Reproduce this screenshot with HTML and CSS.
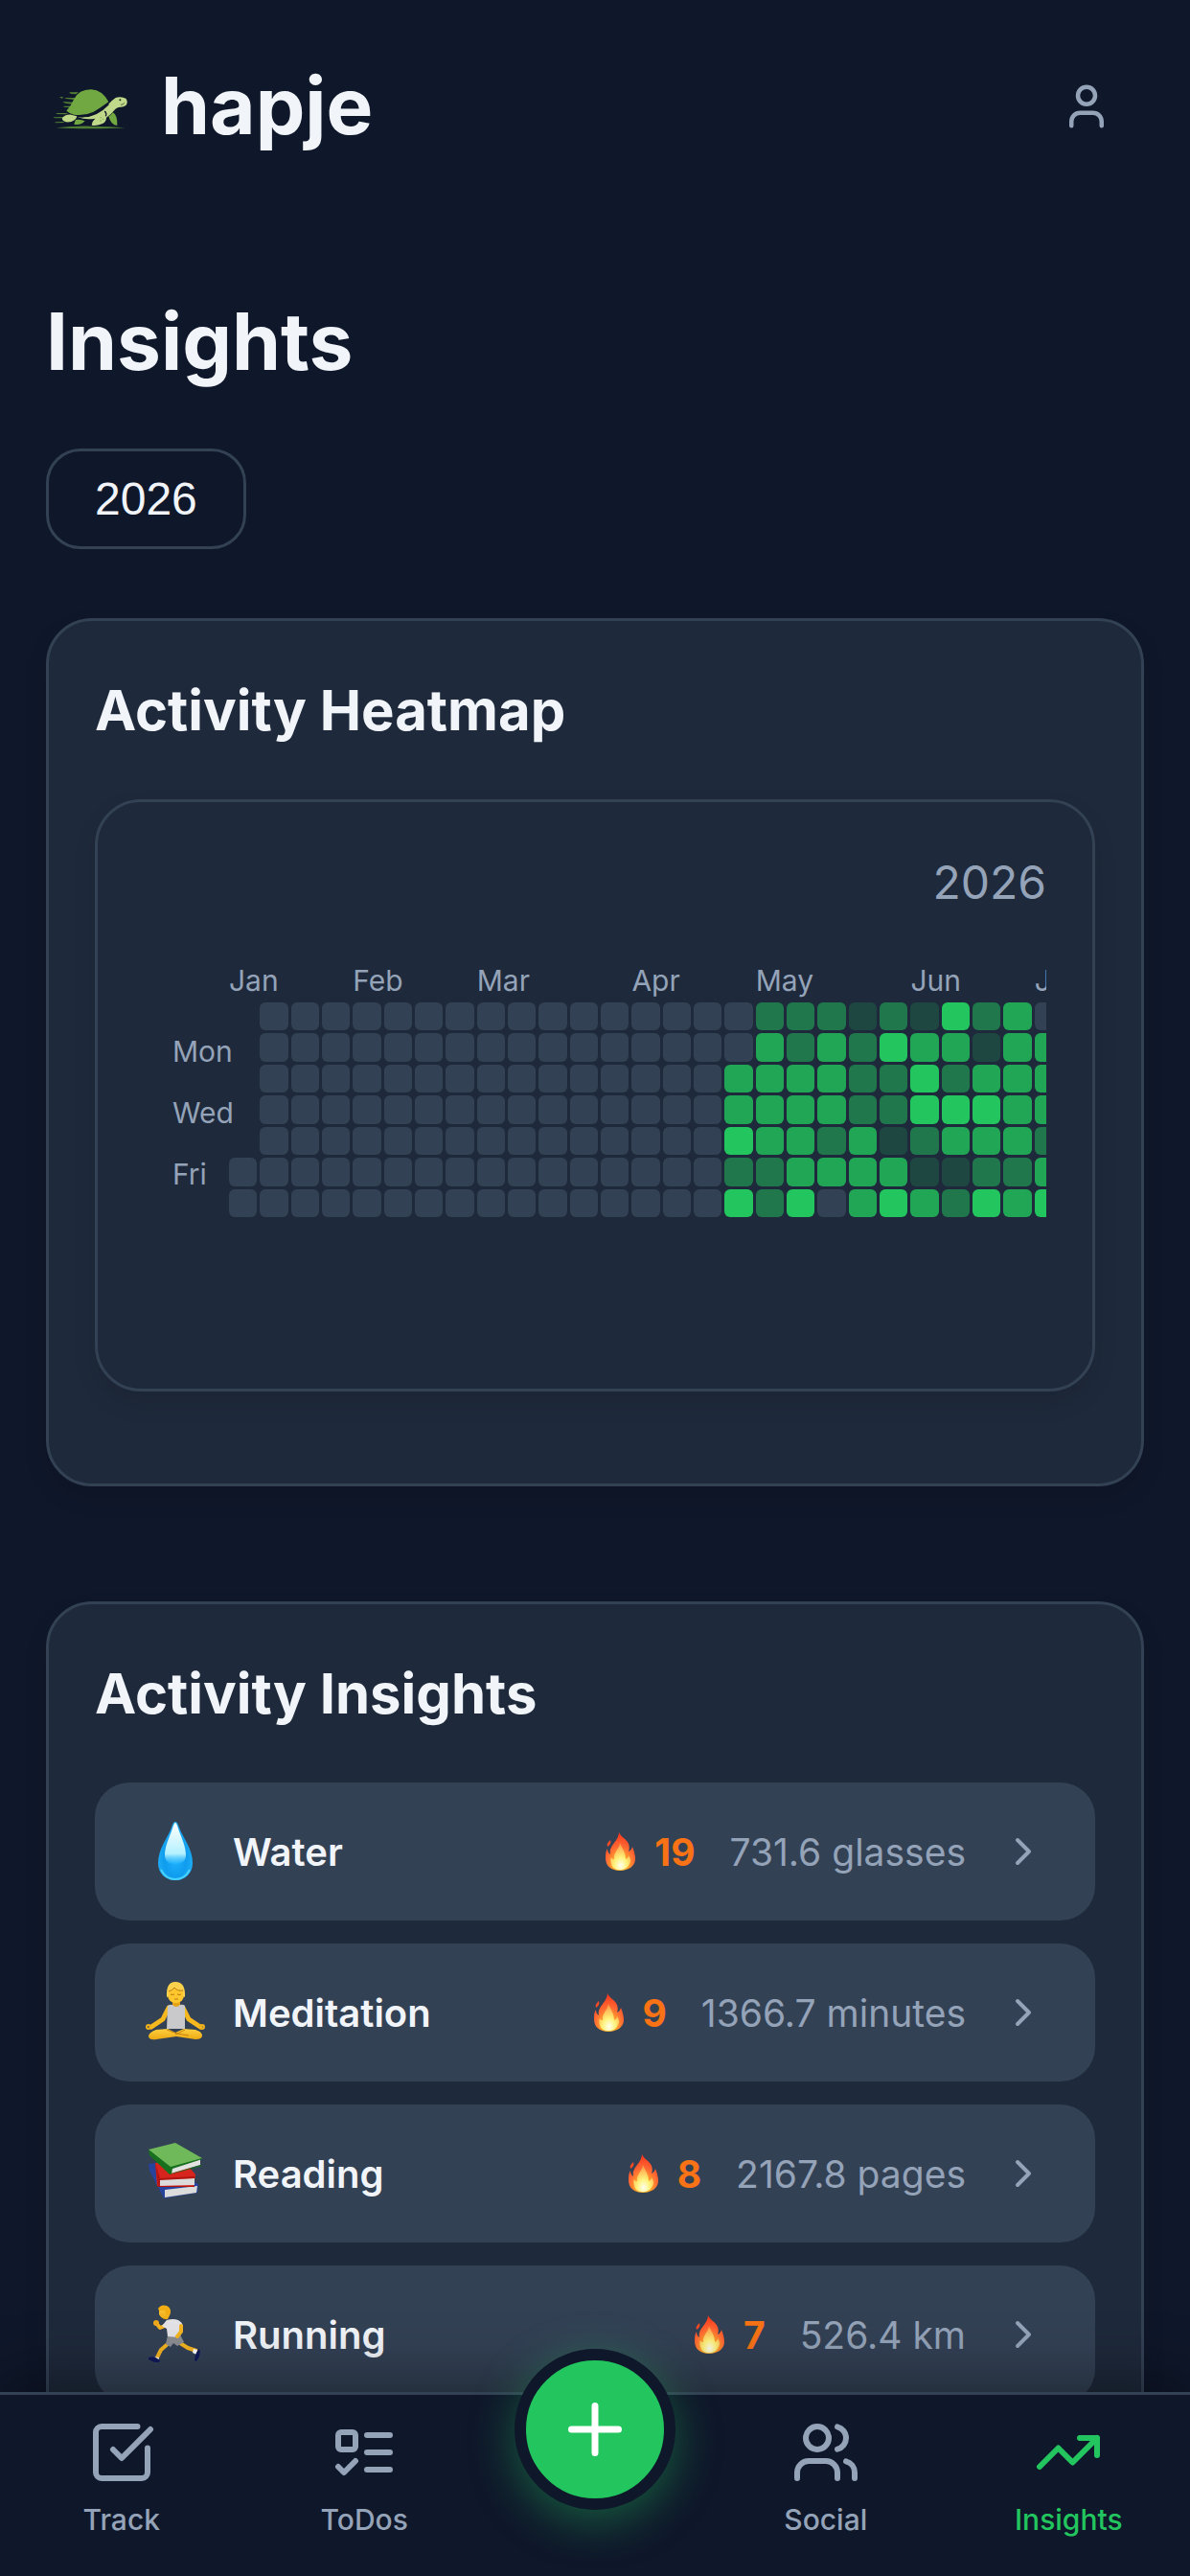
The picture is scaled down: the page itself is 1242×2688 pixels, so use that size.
FILE: index.html
```html
<!DOCTYPE html>
<html lang="en">
<head>
    <meta charset="UTF-8">
    <meta name="viewport" content="width=device-width, initial-scale=1.0">
    <title>hapje - Insights</title>
    <link rel="stylesheet" href="styles.css">
</head>
<body>
    <!-- Shared icons -->
    <svg class="sprite" aria-hidden="true">
        <defs>
            <radialGradient id="flameOuter" cx="0.5" cy="0.85" r="0.8">
                <stop offset="0" stop-color="#ffe04a"/>
                <stop offset="0.3" stop-color="#ffa52b"/>
                <stop offset="0.6" stop-color="#ff6a33"/>
                <stop offset="1" stop-color="#fa3a1e"/>
            </radialGradient>
            <radialGradient id="flameInner" cx="0.5" cy="0.85" r="0.8">
                <stop offset="0" stop-color="#fffff0"/>
                <stop offset="0.4" stop-color="#fff27a"/>
                <stop offset="1" stop-color="#ff9a45"/>
            </radialGradient>
            <radialGradient id="dropOuter" cx="0.5" cy="0.62" r="0.6">
                <stop offset="0" stop-color="#1fb4ff"/>
                <stop offset="0.55" stop-color="#0f9cee"/>
                <stop offset="1" stop-color="#25b5f7"/>
            </radialGradient>
            <linearGradient id="dropInner" x1="0" y1="0" x2="0" y2="1">
                <stop offset="0" stop-color="#ffffff"/>
                <stop offset="0.75" stop-color="#b4f1ff"/>
                <stop offset="1" stop-color="#3fc4ff" stop-opacity="0.3"/>
            </linearGradient>
            <linearGradient id="skin" x1="0" y1="0" x2="0" y2="1">
                <stop offset="0" stop-color="#ffd040"/>
                <stop offset="1" stop-color="#eda913"/>
            </linearGradient>
        </defs>
        <symbol id="flame" viewBox="0 0 36 42">
            <path fill="url(#flameOuter)" d="M17 1c2 5 8 7 10 12 1 3 1 5 0 8 2-1 3-2 4-5 2 5 3 9 3 13 0 7-7 12-16 12S3 36 3 28c0-4 0-7 2-10 0 3 1 5 3 6-1-5 1-8 4-12 3-4 5-7 5-11z"/>
            <path fill="#fa4a26" d="M8 9c-3 3-4 4-3 7 3-2 4-4 3-7z"/>
            <path fill="url(#flameInner)" d="M18 12c2 5 6 10 6 17 2-1 3-2 3-4 2 3 3 6 1 9-2 4-5 6-10 6s-8-2-9-6c-1-3-1-5 0-7 1 2 2 2 3 2-1-7 5-10 6-17z"/>
        </symbol>
        <symbol id="chevron" viewBox="0 0 24 24">
            <path d="m9 18 6-6-6-6"/>
        </symbol>
    </svg>

    <div class="app">
        <header class="header">
            <div class="brand">
                <svg class="brand-logo" viewBox="24 -51 288 288" aria-hidden="true">
                    <g fill="#4f7d33">
                        <path d="M96 49l30-1-8 7-16-1zM66 64l8-1 5 2-5 3zM82 66l35 0-6 6-24-3zM76 78l34 2-4 6-22-3zM82 92l20 0-4 5-20-2zM58 114l36 0-8 4-30-1zM46 127l34-1-3 4-26 0zM52 142l26-1 4 3-28 1z"/>
                        <path d="M56 160q52-6 106-5 60 0 110 5-50 3-110 3-60 0-106-3z"/>
                    </g>
                    <path fill="#72a842" d="M88 107q14-15 23-36Q127 40 165 40q36 2 55 39-24 18-47 31-30 14-62 9-12-3-23-12z"/>
                    <g fill="#bfd88a">
                        <path d="M74 131q10-14 29-12l18 5q-3 13-18 17-23 5-29-10z"/>
                        <path d="M122 126q50 8 96-38 12-14 24-22 16-6 32 2 8 10 1 21-7 6-17 6-14 1-20 10-11 15-25 23 0 14-14 20-18 8-32 4 2-14 11-21-30 5-56-5z"/>
                    </g>
                    <g fill="#72a842">
                        <path d="M117 135q16-2 29 4-12 14-34 10 2-8 5-14zM220 124q9-4 13-12 15 7 14 41-20-1-27-29z"/>
                        <circle cx="196" cy="128" r="2"/>
                        <circle cx="203" cy="133" r="2"/>
                        <circle cx="195" cy="138" r="2"/>
                    </g>
                    <path fill="none" stroke="#0f172a" stroke-width="4" d="M208 108q7 7 3 16M128 124q50 6 92-38"/>
                    <circle cx="256" cy="73" r="3" fill="#1d2d24"/>
                    <path fill="none" stroke="#1d2d24" stroke-width="2" d="M258 88q8 0 12-6"/>
                </svg>
                <span class="brand-name">hapje</span>
            </div>
            <button class="profile-button" type="button" aria-label="Profile">
                <svg class="icon" viewBox="0 0 24 24" aria-hidden="true">
                    <path d="M19 21v-2a4 4 0 0 0-4-4H9a4 4 0 0 0-4 4v2"/>
                    <circle cx="12" cy="7" r="4"/>
                </svg>
            </button>
        </header>

        <main class="content">
            <h1>Insights</h1>
            <select class="year-select" aria-label="Year">
                <option>2026</option>
            </select>

            <section class="card">
                <h2>Activity Heatmap</h2>
                <div class="heatmap-card">
                    <div class="heatmap-year">2026</div>
                    <div class="heatmap">
                        <div class="heatmap-days">
                            <span class="day-mon">Mon</span>
                            <span class="day-wed">Wed</span>
                            <span class="day-fri">Fri</span>
                        </div>
                        <div class="heatmap-scroll">
                            <div class="heatmap-months" id="months"></div>
                            <div class="heatmap-cells" id="cells"></div>
                        </div>
                    </div>
                </div>
            </section>

            <section class="card">
                <h2>Activity Insights</h2>
                <div class="activity-list">
                    <a class="activity" href="#water">
                        <svg class="activity-icon" viewBox="0 0 66 66" aria-hidden="true">
                            <path fill="url(#dropOuter)" d="M33 2c2 0 3 3 4 6 4 11 14 22 14 37 0 11-8 18-18 18s-18-7-18-18C15 30 25 19 29 8c1-3 2-6 4-6z"/>
                            <path fill="none" stroke="#48d2ff" stroke-width="2" d="M18 52c3 6 8 10 15 10s12-4 15-10"/>
                            <path fill="url(#dropInner)" d="M33 3c1 0 2 3 3 6 3 9 8 18 8 28 0 6-5 9-11 9s-11-3-11-9c0-10 5-19 8-28 1-3 2-6 3-6z"/>
                        </svg>
                        <span class="activity-name">Water</span>
                        <span class="streak"><svg class="flame" aria-hidden="true"><use href="#flame"/></svg>19</span>
                        <span class="activity-total">731.6 glasses</span>
                        <svg class="icon chevron" aria-hidden="true"><use href="#chevron"/></svg>
                    </a>
                    <a class="activity" href="#meditation">
                        <svg class="activity-icon" viewBox="0 0 66 66" aria-hidden="true">
                            <path fill="none" stroke="#f5b91f" stroke-width="5" stroke-linecap="round" stroke-linejoin="round" d="M26 28l-6 12-12 8M41 28l6 12 12 8"/>
                            <circle cx="5" cy="48" r="2" fill="none" stroke="#f0b01c" stroke-width="2"/>
                            <circle cx="61" cy="48" r="2" fill="none" stroke="#f0b01c" stroke-width="2"/>
                            <path fill="#e5a417" d="M30 20h8v8h-8z"/>
                            <path fill="#c9c9cc" d="M25 26q3-2 5-1 4 4 8 0 3-1 5 1v24H24z"/>
                            <path fill="url(#skin)" d="M25 50l-12 1q-8 3-8 7 1 4 8 3l21-3 20 3q7 0 7-4 0-4-7-6l-12-1-9 4z"/>
                            <path fill="none" stroke="#c8830c" stroke-width="1" d="M24 51q10 5 23 6M43 51l-10 5"/>
                            <rect x="25" y="3" width="17" height="20" rx="8" fill="#ffc72e"/>
                            <path fill="#f9d14c" d="M24 17q-1-16 9-16 11 0 10 16l-2-1 0-6q-6 1-9-3-2 3-6 4l0 5z"/>
                            <path fill="none" stroke="#b87a0c" stroke-width="1" d="M26 11q4-1 6-4 3 4 9 3M28 14q2 1 4 0M35 14q2 1 4 0M32 19h4"/>
                        </svg>
                        <span class="activity-name">Meditation</span>
                        <span class="streak"><svg class="flame" aria-hidden="true"><use href="#flame"/></svg>9</span>
                        <span class="activity-total">1366.7 minutes</span>
                        <svg class="icon chevron" aria-hidden="true"><use href="#chevron"/></svg>
                    </a>
                    <a class="activity" href="#reading">
                        <svg class="activity-icon" viewBox="0 0 66 66" aria-hidden="true">
                            <path fill="#27439b" d="M5 23l8-1 44 22-1 9-35 6L6 30z"/>
                            <path fill="#dcdcdc" d="M22 50l34-4-1 7-33 5z"/>
                            <path fill="#d7241c" d="M12 22l30-2 12 14-2 13-38-1z"/>
                            <path fill="#dcdcdc" d="M15 39l38-1v7l-38 1z"/>
                            <path fill="#b01510" d="M12 22l3 24 2 0v-6l36-2v-2l-36 2zM14 46h39v1H15z"/>
                            <path fill="#6fb95b" d="M5 8l28-7 28 16-33 10z"/>
                            <path fill="#e2e2e2" d="M28 27l31-9v6l-31 9z"/>
                            <path fill="#17701d" d="M5 8l23 18 33-9v1l-31 10-1 5 31-9 1 1-34 9L6 14z"/>
                        </svg>
                        <span class="activity-name">Reading</span>
                        <span class="streak"><svg class="flame" aria-hidden="true"><use href="#flame"/></svg>8</span>
                        <span class="activity-total">2167.8 pages</span>
                        <svg class="icon chevron" aria-hidden="true"><use href="#chevron"/></svg>
                    </a>
                    <a class="activity" href="#running">
                        <svg class="activity-icon" viewBox="0 0 66 66" aria-hidden="true">
                            <path fill="none" stroke="#f5b421" stroke-width="4" stroke-linecap="round" stroke-linejoin="round" d="M22 24l-5 2-4-5M26 42l-8 7-4 8M38 42l8 5 9 3"/>
                            <circle cx="13" cy="21" r="3" fill="#f0a91c"/>
                            <path fill="#fff" d="M10 56l6 1-1 3-6-1zM52 48l4 1-1 5-4-2z"/>
                            <path fill="#111a5c" d="M5 57l6-1 6 4-1 2-5 0-6-3zM57 48l2 2-1 6-3 5-2-1 1-6z"/>
                            <path fill="#8c8d92" d="M25 34l13-1 4 8-7 4-4-3-3 4-5-3z"/>
                            <path fill="#e4e4e8" d="M24 18q7-2 12 0 4 2 5 6l-4 5 0 7-12-1-1-8-5-3z"/>
                            <path fill="none" stroke="#f5b421" stroke-width="4" stroke-linecap="round" stroke-linejoin="round" d="M39 24l0 6-4 5"/>
                            <path fill="url(#skin)" d="M16 6q4-4 9-2 4 3 2 9l-2 4q-6 1-9-5z"/>
                            <path fill="#f2ad14" d="M15 6q3-5 9-3 6 3 3 10l-3 0-2-5-6 0z"/>
                        </svg>
                        <span class="activity-name">Running</span>
                        <span class="streak"><svg class="flame" aria-hidden="true"><use href="#flame"/></svg>7</span>
                        <span class="activity-total">526.4 km</span>
                        <svg class="icon chevron" aria-hidden="true"><use href="#chevron"/></svg>
                    </a>
                </div>
            </section>
        </main>

        <nav class="nav">
            <a class="nav-item" href="#track">
                <svg class="icon" viewBox="0 0 24 24" aria-hidden="true">
                    <path d="M21 10.5V19a2 2 0 0 1-2 2H5a2 2 0 0 1-2-2V5a2 2 0 0 1 2-2h12.5"/>
                    <path d="m9 11 3 3L22 4"/>
                </svg>
                <span>Track</span>
            </a>
            <a class="nav-item" href="#todos">
                <svg class="icon" viewBox="0 0 24 24" aria-hidden="true">
                    <rect x="3" y="5" width="6" height="6" rx="1"/>
                    <path d="m3 17 2 2 4-4M13 6h8M13 12h8M13 18h8"/>
                </svg>
                <span>ToDos</span>
            </a>
            <button class="add-button" type="button" aria-label="Add">
                <svg class="icon" viewBox="0 0 24 24" aria-hidden="true">
                    <path d="M5 12h14M12 5v14"/>
                </svg>
            </button>
            <a class="nav-item" href="#social">
                <svg class="icon" viewBox="0 0 24 24" aria-hidden="true">
                    <path d="M16 21v-2a4 4 0 0 0-4-4H6a4 4 0 0 0-4 4v2"/>
                    <circle cx="9" cy="7" r="4"/>
                    <path d="M22 21v-2a4 4 0 0 0-3-3.87M16 3.13a4 4 0 0 1 0 7.75"/>
                </svg>
                <span>Social</span>
            </a>
            <a class="nav-item active" href="#insights">
                <svg class="icon" viewBox="0 0 24 24" aria-hidden="true">
                    <path d="M22 7l-8.5 8.5-5-5L2 17"/>
                    <path d="M16 7h6v6"/>
                </svg>
                <span>Insights</span>
            </a>
        </nav>
    </div>

    <script>
        // First week column of every month
        const months = { Jan: 1, Feb: 5, Mar: 9, Apr: 14, May: 18, Jun: 23, Jul: 27 };

        // Activity level per day from week 17 on, one string per week (Sun - Sat)
        const firstActiveWeek = 17;
        const weeks = [
            '0033424', '2333322', '2233334', '2333230', '1222333', '2422134',
            '1344213', '4324312', '2134324', '3333323', '0333234'
        ];

        const monthsRow = document.getElementById('months');
        for (const name in months) {
            const label = document.createElement('span');
            label.textContent = name;
            label.style.gridColumn = months[name];
            monthsRow.appendChild(label);
        }

        const cells = document.getElementById('cells');
        for (let week = 1; week <= 27; week++) {
            const levels = weeks[week - firstActiveWeek] || '0000000';
            for (let day = 0; day < 7; day++) {
                const cell = document.createElement('div');
                // The first week only has Friday and Saturday
                const blank = week === 1 && day < 5;
                cell.className = blank ? 'cell blank' : 'cell level-' + levels[day];
                cells.appendChild(cell);
            }
        }
    </script>
</body>
</html>
```
FILE: styles.css
```css
* {
    box-sizing: border-box;
}
body {
    margin: 0;
    font-family: Inter, "Liberation Sans", sans-serif;
    font-size: 40px;
    background-color: #0f172a;
    color: #f1f5f9;
}
a {
    color: inherit;
    text-decoration: none;
}
.sprite {
    position: absolute;
    width: 0;
    height: 0;
}
.icon {
    fill: none;
    stroke: currentColor;
    stroke-width: 2;
    stroke-linecap: round;
    stroke-linejoin: round;
}
.app {
    display: flex;
    flex-direction: column;
    height: 100vh;
}

/* Header */
.header {
    display: flex;
    align-items: center;
    justify-content: space-between;
    padding: 48px;
}
.brand {
    display: flex;
    align-items: center;
    gap: 24px;
}
.brand-logo {
    width: 96px;
    height: 96px;
}
.brand-name {
    font-size: 82px;
    line-height: 126px;
    font-weight: 700;
}
.profile-button {
    padding: 33px;
    border: none;
    background: none;
    color: #94a3b8;
    cursor: pointer;
}
.profile-button .icon {
    display: block;
    width: 54px;
    height: 54px;
}

/* Page */
.content {
    flex: 1;
    min-height: 0;
    padding: 72px 48px;
    overflow-y: auto;
    scrollbar-width: none;
}
h1 {
    margin: 0 0 48px;
    font-size: 82px;
    line-height: 126px;
    font-weight: 700;
}
h2 {
    margin: 0 0 48px;
    font-size: 58px;
    line-height: 90px;
    font-weight: 700;
}
.year-select {
    display: block;
    height: 105px;
    margin-bottom: 72px;
    padding: 0 48px;
    border: 3px solid #334155;
    border-radius: 36px;
    background-color: #0f172a;
    color: #f1f5f9;
    font-family: "Liberation Sans", sans-serif;
    font-size: 48px;
    appearance: none;
}
.card {
    margin-bottom: 120px;
    padding: 48px 48px 96px;
    border: 3px solid #334155;
    border-radius: 48px;
    background-color: #1e293b;
    box-shadow: 0 12px 24px rgba(0, 0, 0, 0.1);
}

/* Heatmap */
.heatmap-card {
    padding: 48px;
    border: 3px solid #334155;
    border-radius: 48px;
    box-shadow: 0 12px 24px rgba(0, 0, 0, 0.1);
}
.heatmap-year {
    color: #94a3b8;
    font-size: 48px;
    line-height: 72px;
    text-align: right;
}
.heatmap {
    display: flex;
    padding: 44px 0 128px 30px;
    color: #94a3b8;
    font-size: 30px;
    line-height: 45px;
}
.heatmap-days {
    display: grid;
    grid-template-rows: repeat(7, minmax(0, 1fr));
    flex: none;
    align-items: center;
    width: 59px;
    height: 224px;
    margin-top: 48px;
}
.day-mon {
    grid-row: 2;
}
.day-wed {
    grid-row: 4;
}
.day-fri {
    grid-row: 6;
}
.heatmap-scroll {
    flex: 1;
    min-width: 0;
    overflow: hidden;
}
.heatmap-months,
.heatmap-cells {
    display: grid;
    grid-template-columns: repeat(53, 1fr);
    gap: 3px;
    width: 1711px;
}
.heatmap-months span {
    width: 0;
    grid-row: 1;
}
.heatmap-cells {
    grid-template-rows: repeat(7, 1fr);
    grid-auto-flow: column;
    height: 224px;
}
.cell {
    border-radius: 6px;
}
.level-0 {
    background-color: #334155;
}
.level-1 {
    background-color: rgba(34, 197, 94, 0.2);
}
.level-2 {
    background-color: rgba(34, 197, 94, 0.5);
}
.level-3 {
    background-color: rgba(34, 197, 94, 0.8);
}
.level-4 {
    background-color: #22c55e;
}

/* Activities */
.activity-list {
    display: flex;
    flex-direction: column;
    gap: 24px;
}
.activity {
    display: flex;
    align-items: center;
    height: 144px;
    padding: 0 51px;
    border-radius: 36px;
    background-color: #334155;
}
.activity-icon {
    width: 66px;
    height: 66px;
    margin-right: 27px;
}
.activity-name {
    flex: 1;
    font-weight: 600;
}
.streak {
    display: flex;
    align-items: center;
    gap: 18px;
    margin-right: 36px;
    color: #f97316;
    font-size: 39px;
    font-weight: 700;
}
.flame {
    width: 36px;
    height: 42px;
}
.activity-total {
    color: #94a3b8;
    font-size: 39px;
}
.chevron {
    width: 48px;
    height: 48px;
    margin-left: 36px;
    color: #94a3b8;
}

/* Bottom navigation */
.nav {
    position: relative;
    display: grid;
    grid-template-columns: 1fr 1fr 228px 1fr 1fr;
    height: 192px;
    border-top: 3px solid #334155;
    background-color: #0f172a;
    box-shadow: 0 -12px 60px rgba(0, 0, 0, 0.4);
}
.nav-item {
    display: flex;
    flex-direction: column;
    align-items: center;
    gap: 12px;
    padding-top: 24px;
    color: #94a3b8;
    font-size: 30px;
    line-height: 45px;
    font-weight: 500;
}
.nav-item .icon {
    width: 72px;
    height: 72px;
}
.nav-item.active {
    color: #22c55e;
}
.add-button {
    display: flex;
    align-items: center;
    justify-content: center;
    justify-self: center;
    width: 168px;
    height: 168px;
    margin-top: -48px;
    padding: 0;
    border: 12px solid #0f172a;
    border-radius: 50%;
    background-color: #22c55e;
    color: #fff;
    box-shadow: 0 12px 48px rgba(34, 197, 94, 0.4);
    cursor: pointer;
}
.add-button .icon {
    width: 84px;
    height: 84px;
}
```
